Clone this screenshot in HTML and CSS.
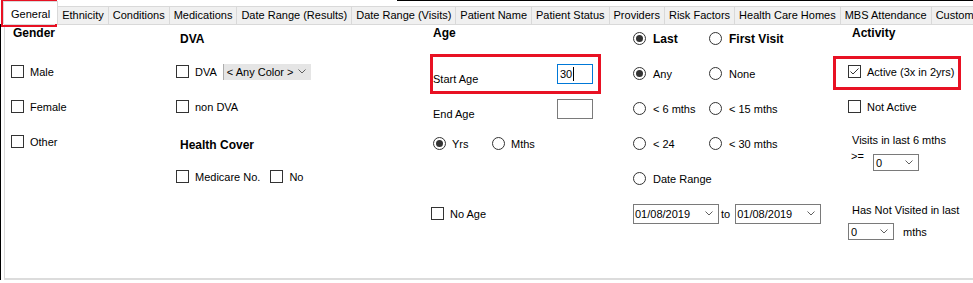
FILE: index.html
```html
<!DOCTYPE html>
<html lang="en">
<head>
  <meta charset="UTF-8">
  <title>Search Filters - General</title>
  <link rel="stylesheet" href="styles.css">
</head>
<body>
  <div class="edge"></div>

  <div class="tabs">
    <div class="tab active">General</div>
    <div class="tab">Ethnicity</div>
    <div class="tab">Conditions</div>
    <div class="tab">Medications</div>
    <div class="tab">Date Range (Results)</div>
    <div class="tab">Date Range (Visits)</div>
    <div class="tab">Patient Name</div>
    <div class="tab">Patient Status</div>
    <div class="tab">Providers</div>
    <div class="tab">Risk Factors</div>
    <div class="tab">Health Care Homes</div>
    <div class="tab">MBS Attendance</div>
    <div class="tab">Custom</div>
  </div>

  <div class="frame">
    <div class="panel">

      <!-- Gender -->
      <div class="col gender">
        <div class="head">Gender</div>
        <div class="row"><span class="check"></span>Male</div>
        <div class="row"><span class="check"></span>Female</div>
        <div class="row"><span class="check"></span>Other</div>
      </div>

      <!-- DVA / Health cover -->
      <div class="col dva">
        <div class="head">DVA</div>
        <div class="row">
          <span class="check"></span>
          <span>DVA</span>
          <span class="combo flat">&lt; Any Color &gt;
            <svg class="chev" width="8" height="5" viewBox="0 0 8 5"><polyline points="0.5,0.5 4,4 7.5,0.5"/></svg>
          </span>
        </div>
        <div class="row"><span class="check"></span>non DVA</div>
        <div class="row head-row">Health Cover</div>
        <div class="row">
          <span class="check"></span>
          <span>Medicare No.</span>
          <span class="check sub"></span>
          <span>No</span>
        </div>
      </div>

      <!-- Age -->
      <div class="col age">
        <div class="head">Age</div>
        <div class="row">
          <span class="age-label">Start Age</span>
          <span class="field focus">30<i class="caret"></i></span>
        </div>
        <div class="row">
          <span class="age-label">End Age</span>
          <span class="field"></span>
        </div>
        <div class="row units">
          <span class="radio on"></span><span class="yrs">Yrs</span>
          <span class="radio"></span><span>Mths</span>
        </div>
        <div class="row"></div>
        <div class="row no-age"><span class="check"></span>No Age</div>
      </div>

      <!-- Last / First visit -->
      <div class="col last">
        <div class="row">
          <span class="cell"><span class="radio on"></span><b>Last</b></span>
          <span class="cell"><span class="radio"></span><b>First Visit</b></span>
        </div>
        <div class="row">
          <span class="cell"><span class="radio on"></span>Any</span>
          <span class="cell"><span class="radio"></span>None</span>
        </div>
        <div class="row">
          <span class="cell"><span class="radio"></span>&lt; 6 mths</span>
          <span class="cell"><span class="radio"></span>&lt; 15 mths</span>
        </div>
        <div class="row">
          <span class="cell"><span class="radio"></span>&lt; 24</span>
          <span class="cell"><span class="radio"></span>&lt; 30 mths</span>
        </div>
        <div class="row">
          <span class="cell wide"><span class="radio"></span>Date Range</span>
        </div>
        <div class="row">
          <span class="date">01/08/2019
            <svg class="chev" width="8" height="5" viewBox="0 0 8 5"><polyline points="0.5,0.5 4,4 7.5,0.5"/></svg>
          </span>
          <span class="to">to</span>
          <span class="date">01/08/2019
            <svg class="chev" width="8" height="5" viewBox="0 0 8 5"><polyline points="0.5,0.5 4,4 7.5,0.5"/></svg>
          </span>
        </div>
      </div>

      <!-- Activity -->
      <div class="col activity">
        <div class="head">Activity</div>
        <div class="row">
          <span class="check">
            <svg width="11" height="11" viewBox="0 0 11 11"><polyline points="1.5,5.5 4,8 9.5,2.5"/></svg>
          </span>
          Active (3x in 2yrs)
        </div>
        <div class="row"><span class="check"></span>Not Active</div>
        <div class="note">Visits in last 6 mths</div>
        <div class="ge-row">
          <span class="ge-label">&gt;=</span>
          <span class="combo small">0
            <svg class="chev" width="8" height="5" viewBox="0 0 8 5"><polyline points="0.5,0.5 4,4 7.5,0.5"/></svg>
          </span>
        </div>
        <div class="note note-2">Has Not Visited in last</div>
        <div class="mths-row">
          <span class="combo small">0
            <svg class="chev" width="8" height="5" viewBox="0 0 8 5"><polyline points="0.5,0.5 4,4 7.5,0.5"/></svg>
          </span>
          <span>mths</span>
        </div>
      </div>

    </div>
  </div>

  <!-- red annotation boxes -->
  <div class="mark mark-tab"></div>
  <div class="mark mark-age"></div>
  <div class="mark mark-active"></div>
</body>
</html>
```

FILE: styles.css
```css
* {
  box-sizing: border-box;
}

html,
body {
  margin: 0;
}

body {
  position: relative;
  width: 973px;
  height: 283px;
  overflow: hidden;
  font-family: "Liberation Sans", Arial, sans-serif;
  font-size: 11px;
  color: #000;
  background: #fff;
}

.edge {
  height: 1px;
  margin-left: 397px;
  background: #000;
}

/* tab strip */
.tabs {
  display: flex;
  align-items: flex-end;
  height: 23px;
  padding-left: 3px;
  overflow: hidden;
}

.tab {
  height: 18px;
  margin-left: -1px;
  padding: 0 4px;
  border: 1px solid #d9d9d9;
  border-bottom: 0;
  background: #f0f0f0;
  line-height: 17px;
  white-space: nowrap;
}

.tab.active {
  position: relative;
  z-index: 1;
  height: 24px;
  margin-left: 0;
  margin-bottom: -1px;
  padding: 4px 7px 0;
  line-height: 16px;
  background: #fff;
}

/* page body */
.frame {
  border-left: 1px solid #000;
  padding-left: 3px;
}

.panel {
  display: grid;
  grid-template-columns: 165px 254px 203px 215px 1fr;
  height: 256px;
  padding-left: 6px;
  border: 1px solid #d9d9d9;
  border-right: 0;
  border-bottom: 2px solid #dcdcdc;
}

.col {
  display: flex;
  flex-direction: column;
}

.head {
  flex-shrink: 0;
  height: 29px;
  padding-left: 2px;
  font-size: 12px;
  font-weight: bold;
  line-height: 17px;
}

.row {
  flex-shrink: 0;
  display: flex;
  align-items: center;
  gap: 6px;
  height: 35px;
  white-space: nowrap;
}

b {
  font-size: 12px;
}

/* controls */
.check {
  flex-shrink: 0;
  display: flex;
  align-items: center;
  justify-content: center;
  width: 13px;
  height: 13px;
  border: 1px solid #333;
  background: #fff;
}

.check svg polyline {
  fill: none;
  stroke: #333;
  stroke-width: 1;
}

.radio {
  flex-shrink: 0;
  display: flex;
  align-items: center;
  justify-content: center;
  width: 13px;
  height: 13px;
  border: 1px solid #333;
  border-radius: 50%;
  background: #fff;
}

.radio.on::after {
  content: "";
  width: 7px;
  height: 7px;
  border-radius: 50%;
  background: #333;
}

.chev polyline {
  fill: none;
  stroke: #606060;
  stroke-width: 1;
}

.combo {
  display: flex;
  align-items: center;
  justify-content: space-between;
  white-space: nowrap;
}

.combo.flat {
  width: 88px;
  height: 16px;
  padding: 0 5px 0 3px;
  border-left: 1px solid #adadad;
  background: #e5e5e5;
}

.combo.small {
  width: 46px;
  height: 17px;
  padding: 0 5px 0 2px;
  border: 1px solid #7a7a7a;
  background: #fff;
}

.field {
  display: block;
  width: 36px;
  height: 20px;
  padding-left: 2px;
  border: 1px solid #7a7a7a;
  background: #fff;
  line-height: 18px;
}

.field.focus {
  border-color: #0078d7;
}

.caret {
  display: inline-block;
  width: 1px;
  height: 14px;
  margin-left: 1px;
  vertical-align: -3px;
  background: #000;
}

.date {
  display: flex;
  align-items: center;
  justify-content: space-between;
  width: 86px;
  height: 20px;
  padding: 0 5px 0 1px;
  border: 1px solid #7a7a7a;
  background: #fff;
}

/* DVA column */
.dva .head {
  padding: 6px 0 0 4px;
}

.head-row {
  padding: 7px 0 0 4px;
  font-size: 12px;
  font-weight: bold;
}

.sub {
  margin-left: 4px;
}

/* Age column */
.age .head {
  height: 31px;
  padding-left: 3px;
}

.age-label {
  width: 121px;
  padding: 11px 0 0 3px;
}

.units {
  padding-left: 3px;
}

.yrs {
  width: 34px;
}

.no-age {
  padding-left: 1px;
}

/* Last / first visit column */
.last {
  margin-top: -4px;
}

.last .row {
  gap: 0;
}

.cell {
  display: flex;
  align-items: center;
  gap: 7px;
  width: 76px;
}

.cell.wide {
  width: auto;
}

.to {
  margin: 0 5px 0 2px;
}

/* Activity column */
.activity .head {
  padding-left: 4px;
}

.note {
  margin-top: 10px;
  padding-left: 4px;
  line-height: 13px;
  white-space: nowrap;
}

.note-2 {
  margin-top: 33px;
}

.ge-row {
  display: flex;
  align-items: flex-start;
  margin-top: 3px;
}

.ge-label {
  width: 25px;
  padding-left: 3px;
  line-height: 13px;
}

.ge-row .combo {
  margin-top: 4px;
}

.mths-row {
  display: flex;
  align-items: center;
  gap: 9px;
  margin-top: 6px;
}

/* red highlight boxes drawn over the form */
.mark {
  position: absolute;
  border: 3px solid #e81123;
  pointer-events: none;
}

.mark-tab {
  left: 1px;
  top: 0;
  width: 56px;
  height: 27px;
  border-width: 2px;
}

.mark-age {
  left: 430px;
  top: 54px;
  width: 171px;
  height: 40px;
}

.mark-active {
  left: 833px;
  top: 56px;
  width: 128px;
  height: 34px;
}
```
